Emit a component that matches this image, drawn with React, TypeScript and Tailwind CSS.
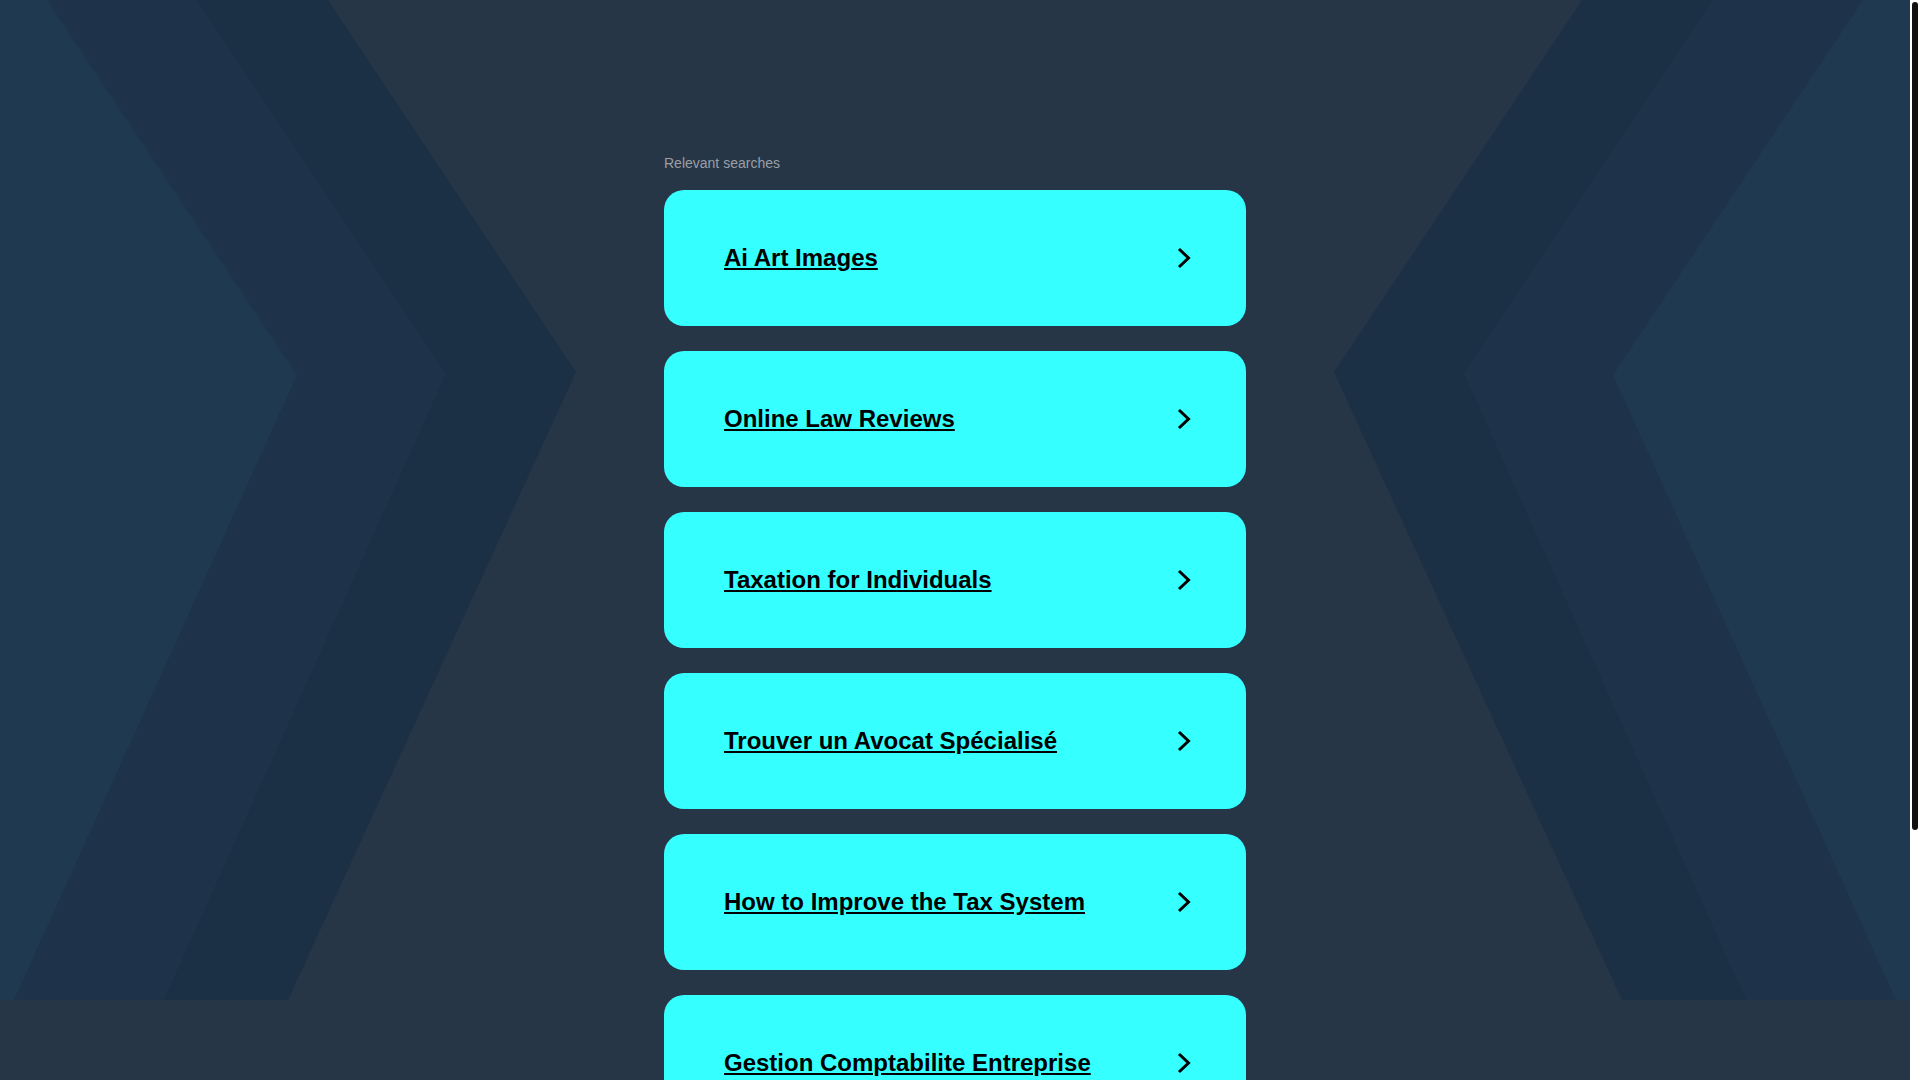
import React from "react";

const items = [
  "Ai Art Images",
  "Online Law Reviews",
  "Taxation for Individuals",
  "Trouver un Avocat Spécialisé",
  "How to Improve the Tax System",
  "Gestion Comptabilite Entreprise",
];

function Chevron() {
  return (
    <svg width="16" height="24" viewBox="0 0 16 24" fill="none" className="shrink-0">
      <polyline points="3,3 12.5,12 3,21" stroke="#000" strokeWidth="3" strokeLinejoin="miter" strokeLinecap="butt" />
    </svg>
  );
}

function Background() {
  return (
    <svg
      className="absolute left-0 top-0 w-full h-[1000px] pointer-events-none"
      viewBox="0 0 1910 1000"
      preserveAspectRatio="none"
    >
      <polygon points="0,0 328,0 576,372 288,1000 0,1000" fill="#1b2f45" />
      <polygon points="0,0 197,0 446,374 164,1000 0,1000" fill="#1e334a" />
      <polygon points="0,0 47,0 297,375 14,1000 0,1000" fill="#1f3950" />
      <polygon points="1910,0 1582,0 1334,372 1622,1000 1910,1000" fill="#1b2f45" />
      <polygon points="1910,0 1713,0 1464,374 1746,1000 1910,1000" fill="#1e334a" />
      <polygon points="1910,0 1863,0 1613,375 1896,1000 1910,1000" fill="#1f3950" />
    </svg>
  );
}

export default function App() {
  return (
    <div
      className="flex h-screen w-screen overflow-hidden bg-[#263647]"
      style={{ fontFamily: '"Liberation Sans", Arial, sans-serif' }}
    >
      <div className="h-full flex-1 overflow-y-auto">
        <div className="relative">
          <Background />
          <div className="relative mx-auto w-[582px] pt-[155px] pb-[278px]">
            <div className="text-[14px] leading-[16px] text-[#9b9fa5] mb-[19px]">Relevant searches</div>
            <div className="flex flex-col gap-[25px]">
              {items.map((t) => (
                <a
                  key={t}
                  href="#"
                  className="flex h-[136px] items-center justify-between rounded-[20px] bg-[#36ffff] pl-[60px] pr-[54px] text-black"
                >
                  <span className="text-[24px] font-bold underline">{t}</span>
                  <Chevron />
                </a>
              ))}
            </div>
          </div>
        </div>
      </div>
      <div className="h-full w-[10px] shrink-0 bg-white px-[2px] pt-[2px]">
        <div className="h-[828px] w-full rounded-full bg-[#111111]" />
      </div>
    </div>
  );
}
